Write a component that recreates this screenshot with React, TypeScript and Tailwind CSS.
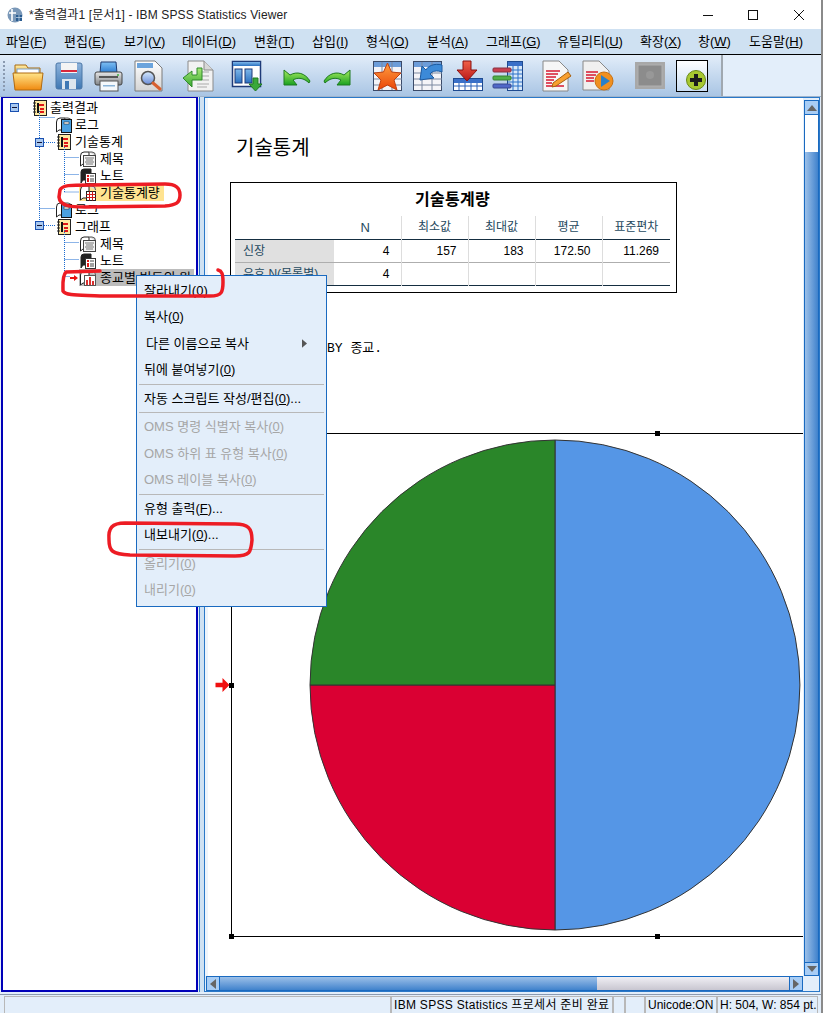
import React from "react";

const G = ({ id, a, b, h }: { id: string; a: string; b: string; h?: boolean }) => (
  <linearGradient id={id} x1="0" y1="0" x2={h ? "1" : "0"} y2={h ? "0" : "1"}>
    <stop offset="0" stopColor={a} />
    <stop offset="1" stopColor={b} />
  </linearGradient>
);

const Svg = ({ children, className }: { children: React.ReactNode; className: string }) => (
  <svg viewBox="0 0 32 32" className={className}>{children}</svg>
);

const Folder = () => (
  <Svg className="w-[32px] h-[32px] shrink-0">
    <defs><G id="f1" a="#ffe58a" b="#f08a10" /><G id="f2" a="#fff2b0" b="#e8a020" /></defs>
    <path d="M3 5 L14 5 L16 8 L28 8 L28 14 L3 14 Z" fill="url(#f2)" stroke="#a86a10" />
    <rect x="5" y="9" width="22" height="6" fill="#fff" stroke="#7aa0c8" />
    <path d="M1 13 L31 13 L29 30 L3 30 Z" fill="url(#f1)" stroke="#b06a10" />
  </Svg>
);
const Save = () => (
  <Svg className="w-[32px] h-[32px] shrink-0">
    <defs><G id="s1" a="#8fb4dc" b="#3f78b4" /></defs>
    <rect x="3" y="3" width="26" height="26" rx="2" fill="url(#s1)" stroke="#4a76a6" />
    <rect x="8" y="3" width="16" height="10" fill="#f4f4f4" />
    <rect x="8" y="10" width="16" height="2" fill="#d8283c" />
    <rect x="9" y="19" width="14" height="10" fill="#dde6ee" />
    <rect x="12" y="21" width="4" height="8" fill="#3f78b4" />
  </Svg>
);
const Printer = () => (
  <Svg className="w-[32px] h-[32px] shrink-0">
    <defs><G id="p1" a="#e8e8e8" b="#808488" /><G id="p2" a="#7fc0f4" b="#2a7ad0" /></defs>
    <path d="M9 2 L24 2 L25 13 L8 13 Z" fill="url(#p2)" stroke="#1e3a70" />
    <rect x="3" y="12" width="27" height="13" rx="2" fill="url(#p1)" stroke="#444" />
    <rect x="7" y="16" width="19" height="2" fill="#555" />
    <rect x="8" y="21" width="18" height="10" fill="#f4f8fb" stroke="#555" />
    <rect x="11" y="25" width="12" height="1.5" fill="#8ab4d8" />
    <circle cx="26" cy="15" r="1" fill="#40b040" />
  </Svg>
);
const Preview = () => (
  <Svg className="w-[32px] h-[32px] shrink-0">
    <defs><G id="v1" a="#ffffff" b="#d4d4d4" /><G id="v2" a="#d8ecff" b="#6a8cd8" /></defs>
    <path d="M2 1 L22 1 L29 8 L29 31 L2 31 Z" fill="url(#v1)" stroke="#7a7a7a" />
    <rect x="4" y="3" width="16" height="5" fill="#6ca4dc" />
    <circle cx="15" cy="18" r="6.5" fill="url(#v2)" stroke="#555" strokeWidth="1.5" />
    <path d="M20 23 L27 29" stroke="#d86030" strokeWidth="3" strokeLinecap="round" />
  </Svg>
);
const Goto = () => (
  <Svg className="w-[32px] h-[32px] shrink-0">
    <defs><G id="g1" a="#a8e878" b="#38a830" /></defs>
    <path d="M6 1 L22 1 L31 10 L31 31 L6 31 Z" fill="#f2f2f2" stroke="#8a8a8a" />
    <path d="M22 1 L22 10 L31 10" fill="#d8d8d8" stroke="#8a8a8a" />
    <path d="M20 12 H27 M20 16 H27 M20 20 H27 M15 24 H27 M15 27 H25" stroke="#aaa" />
    <path d="M1 18 L10 11 L10 15 L15 15 L15 8 L20 8 L20 20 L10 20 L10 27 Z" fill="url(#g1)" stroke="#2f8a2a" />
  </Svg>
);
const Outline = () => (
  <Svg className="w-[32px] h-[32px] shrink-0">
    <defs><G id="o1" a="#7fb8ea" b="#2a70c0" /></defs>
    <rect x="1.5" y="1.5" width="28" height="25" fill="#fff" stroke="#1e3a78" strokeWidth="1.5" />
    <rect x="2" y="2" width="27" height="4" fill="url(#o1)" />
    <rect x="4" y="9" width="7" height="14" fill="url(#o1)" stroke="#1e3a78" />
    <rect x="14" y="9" width="7" height="14" fill="url(#o1)" stroke="#1e3a78" />
    <path d="M22 18 L27 18 L27 24 L31 24 L24.5 31 L18 24 L22 24 Z" fill="#3aa83a" stroke="#1f7a20" />
  </Svg>
);
const Undo = () => (
  <Svg className="w-[32px] h-[32px] shrink-0">
    <defs><G id="u1" a="#a8ec60" b="#18a020" /></defs>
    <path d="M3 10 L3 25 L16 25 L12 20 C17 17 23 18 28 23 L29 21 C24 13 16 11 9 15 Z" fill="url(#u1)" stroke="#1e7a20" />
  </Svg>
);
const Redo = () => (
  <Svg className="w-[32px] h-[32px] shrink-0">
    <defs><G id="r1" a="#a8ec60" b="#18a020" /></defs>
    <path d="M29 10 L29 25 L16 25 L20 20 C15 17 9 18 4 23 L3 21 C8 13 16 11 23 15 Z" fill="url(#r1)" stroke="#1e7a20" />
  </Svg>
);
const TableBase = () => (
  <>
    <rect x="1.5" y="1.5" width="28" height="29" fill="#f4f4f8" stroke="#3a4a68" />
    <rect x="2" y="2" width="27" height="5" fill="#6c9cd8" />
    <path d="M2 13 H30 M2 19 H30 M2 25 H30 M10 2 V30 M20 2 V30" stroke="#7a88a0" />
  </>
);
const StarIcon = () => (
  <Svg className="w-[32px] h-[32px] shrink-0">
    <defs><G id="st" a="#ffa040" b="#ea4408" /></defs>
    <TableBase />
    <path d="M15.5 3 L19.5 12 L29 13 L22 20 L25 30 L15.5 25 L6 30 L9 20 L2 13 L11.5 12 Z" fill="url(#st)" stroke="#c04010" />
  </Svg>
);
const Pivot = () => (
  <Svg className="w-[32px] h-[32px] shrink-0">
    <TableBase />
    <path d="M30 5 C22 3 16 6 14 10 L10 6 L8 20 L22 18 L18 14 C20 11 25 10 30 12 Z" fill="#3c8ad8" stroke="#1c5aa0" />
  </Svg>
);
const ImportIc = () => (
  <Svg className="w-[32px] h-[32px] shrink-0">
    <defs><G id="im" a="#f06048" b="#b81818" /></defs>
    <rect x="1.5" y="18.5" width="29" height="12" fill="#fff" stroke="#1e4a90" />
    <rect x="2" y="19" width="28" height="4" fill="#3a70c8" />
    <path d="M2 26 H30 M7 23 V30 M13 23 V30 M19 23 V30 M25 23 V30" stroke="#2a60b8" />
    <path d="M11 1 L19 1 L19 10 L25 10 L15 21 L5 10 L11 10 Z" fill="url(#im)" stroke="#8a1010" />
  </Svg>
);
const VarTable = () => (
  <Svg className="w-[32px] h-[32px] shrink-0">
    <rect x="15.5" y="1.5" width="15" height="29" fill="#d8e8f8" stroke="#1e4a90" />
    <rect x="16" y="2" width="14" height="4" fill="#3a70c8" />
    <path d="M16 10 H30 M16 14 H30 M16 18 H30 M16 22 H30 M16 26 H30 M21 6 V30 M26 6 V30" stroke="#2a70c8" />
    <rect x="1" y="8" width="18" height="4" rx="1" fill="#c84050" stroke="#883040" />
    <rect x="1" y="16" width="18" height="4" rx="1" fill="#50b048" stroke="#388030" />
    <rect x="1" y="24" width="18" height="4" rx="1" fill="#5068c8" stroke="#384890" />
  </Svg>
);
const DocEdit = () => (
  <Svg className="w-[32px] h-[32px] shrink-0">
    <path d="M1 1 L17 1 L26 10 L26 31 L1 31 Z" fill="#f6f6f6" stroke="#888" />
    <path d="M4 11 H18 M4 14 H16 M4 17 H14 M4 20 H12 M4 23 H10 M4 26 H22" stroke="#d81830" strokeWidth="1.5" />
    <path d="M11 23 L26 12 L29 16 L14 26 L10 27 Z" fill="#f8a030" stroke="#a86010" />
  </Svg>
);
const DocPlay = () => (
  <Svg className="w-[32px] h-[32px] shrink-0">
    <path d="M1 1 L17 1 L27 11 L27 30 L1 30 Z" fill="#f0f0f0" stroke="#888" />
    <path d="M4 12 H16 M4 15 H14 M4 18 H12 M4 21 H12" stroke="#d81830" strokeWidth="1.5" />
    <circle cx="22" cy="21" r="9" fill="#f09020" stroke="#c87010" />
    <path d="M19 15 L28 21 L19 27 Z" fill="#2a80c8" />
  </Svg>
);
const GrayBox = () => (
  <Svg className="w-[32px] h-[32px] shrink-0">
    <rect x="1" y="2" width="30" height="27" fill="#a8a8a8" />
    <rect x="4" y="5" width="24" height="21" fill="#8c8c8c" stroke="#b0b0b0" />
    <circle cx="16" cy="15" r="4" fill="#989898" />
  </Svg>
);
const PlusBox = () => (
  <Svg className="w-[32px] h-[32px] shrink-0">
    <defs><G id="pb" a="#ffffff" b="#c8dcf2" /></defs>
    <rect x="0.5" y="0.5" width="31" height="31" fill="url(#pb)" stroke="#000" />
    <circle cx="20" cy="20" r="9.5" fill="#a8c830" stroke="#6a8a18" />
    <path d="M18 14 H22 V18 H26 V22 H22 V26 H18 V22 H14 V18 H18 Z" fill="#1c1c1c" />
  </Svg>
);

const TI = ({ children }: { children: React.ReactNode }) => (
  <svg viewBox="0 0 16 16" className="w-[16px] h-[16px] shrink-0">{children}</svg>
);
const BookIc = () => (
  <TI>
    <rect x="2.5" y="0.5" width="12" height="15" fill="#ffe9a0" stroke="#222" />
    <path d="M1 3 H4 M1 6 H4 M1 9 H4 M1 12 H4" stroke="#222" />
    <path d="M5 3 H7 V13 H5 Z" fill="#111" />
    <path d="M7 4 H12 V6 H7 Z M8 8 H12 V10 H8 Z M8 11 H12 V13 H8 Z" fill="#e01818" />
  </TI>
);
const Pages = () => (
  <>
    <path d="M0.5 5 Q0.5 1 4 1 H9 V13 H3 L0.5 15 Z" fill="#fff" stroke="#222" />
    <path d="M9 1 H12 Q15.5 1 15.5 5" fill="#ddd" stroke="#555" />
  </>
);
const LogIc = () => (
  <TI>
    <Pages />
    <rect x="5.5" y="2.5" width="10" height="13" fill="#4aa0e0" stroke="#111" />
    <rect x="8" y="5" width="5" height="2" fill="#fff" stroke="#111" strokeWidth="0.5" />
  </TI>
);
const TitleIc = () => (
  <TI>
    <Pages />
    <rect x="3.5" y="4.5" width="12" height="11" fill="#f4f4f4" stroke="#444" />
    <path d="M5 7 H14 M6 9 H13 M5 11 H14 M6 13 H13" stroke="#777" />
  </TI>
);
const NoteIc = () => (
  <TI>
    <path d="M1 4 Q1 1 4 1 H11 V12 H3 L1 15 Z" fill="#222" stroke="#222" />
    <rect x="5.5" y="5.5" width="10" height="10" fill="#fff" stroke="#333" />
    <rect x="7" y="7" width="2" height="2" fill="#e01818" />
    <rect x="7" y="10" width="2" height="4" fill="#e01818" />
    <path d="M10 8 H14 M10 11 H14 M10 13 H14" stroke="#444" />
  </TI>
);
const StatIc = () => (
  <TI>
    <Pages />
    <rect x="6.5" y="6.5" width="9" height="9" fill="#fff" stroke="#222" />
    <path d="M6.5 9.5 H15.5 M6.5 12.5 H15.5 M9.5 6.5 V15.5 M12.5 6.5 V15.5" stroke="#d01818" />
  </TI>
);
const ChartIc = () => (
  <TI>
    <Pages />
    <rect x="4.5" y="5.5" width="11" height="10" fill="#fff" stroke="#555" />
    <path d="M6 10 H8 V15 H6 Z M9 7 H11 V15 H9 Z M12 11 H14 V15 H12 Z" fill="#d83030" />
  </TI>
);

const Key = ({ text, k, tail }: { text: string; k: string; tail?: string }) => (
  <span>
    {text}(<u>{k}</u>){tail}
  </span>
);

const menus: [string, string, string][] = [
  ["파일", "F", "w-[58px]"],
  ["편집", "E", "w-[60px]"],
  ["보기", "V", "w-[58px]"],
  ["데이터", "D", "w-[72px]"],
  ["변환", "T", "w-[58px]"],
  ["삽입", "I", "w-[54px]"],
  ["형식", "O", "w-[61px]"],
  ["분석", "A", "w-[59px]"],
  ["그래프", "G", "w-[71px]"],
  ["유틸리티", "U", "w-[83px]"],
  ["확장", "X", "w-[58px]"],
  ["창", "W", "w-[51px]"],
  ["도움말", "H", "w-[60px]"],
];

const TreeRow = ({ pad, icon, label, gap }: { pad: string; icon: React.ReactNode; label: string; gap?: string }) => (
  <div className={`flex items-center h-[17px] whitespace-nowrap ${pad}`}>
    {icon}
    <span className={gap ?? "ml-[3px]"}>{label}</span>
  </div>
);

const MI = ({ children, dis, cls }: { children: React.ReactNode; dis?: boolean; cls?: string }) => (
  <div className={`h-[26.5px] flex items-center pl-[7px] whitespace-nowrap ${dis ? "text-[#a6a6a6]" : "text-black"} ${cls ?? ""}`}>
    {children}
  </div>
);
const Sep = () => (
  <div className="h-[2px] mx-[2px] flex items-center">
    <div className="h-px w-full bg-[#b8b8b8]" />
  </div>
);

const Handle = ({ cls }: { cls: string }) => <div className={`absolute w-[5px] h-[5px] bg-black ${cls}`} />;

const Tri = ({ d }: { d: string }) => (
  <svg viewBox="0 0 10 10" className="w-[10px] h-[10px]">
    <path d={d} fill="#666" />
  </svg>
);

const SansKr = "font-['Liberation_Sans','Noto_Sans_CJK_KR',sans-serif]";

export default function App() {
  return (
    <div className={`relative w-[833px] h-[1013px] overflow-hidden bg-white text-[13px] text-black ${SansKr}`}>
      <div className="w-[823px] h-[1013px] flex flex-col border-r-2 border-[#8a8a8a] bg-[#e3eefa]">
        {/* title bar */}
        <div className="h-[29px] bg-white flex items-center shrink-0">
          <svg viewBox="0 0 16 16" className="w-[16px] h-[16px] ml-[7px]">
            <circle cx="8" cy="8" r="7.5" fill="#7a98b8" />
            <path d="M5 2 V14 M2 6 H9" stroke="#fff" strokeWidth="1.6" />
            <rect x="9" y="8" width="6" height="6" fill="#2a5c90" />
            <path d="M9 10.5 H15 M12 8 V14" stroke="#cfe0f0" strokeWidth="0.7" />
          </svg>
          <span className="ml-[6px] text-[12px] tracking-[0.14px] text-[#222] whitespace-nowrap">*출력결과1 [문서1] - IBM SPSS Statistics Viewer</span>
          <div className="ml-auto flex items-center h-full">
            <svg viewBox="0 0 10 10" className="w-[10px] h-[10px] mr-[35px]"><path d="M0 5.5 H10" stroke="#111" /></svg>
            <svg viewBox="0 0 10 10" className="w-[10px] h-[10px] mr-[36px]"><rect x="0.5" y="0.5" width="9" height="9" fill="none" stroke="#111" /></svg>
            <svg viewBox="0 0 10 10" className="w-[10px] h-[10px] mr-[17px]"><path d="M0 0 L10 10 M10 0 L0 10" stroke="#111" /></svg>
          </div>
        </div>
        {/* menu bar */}
        <div className="h-[26px] bg-[#cfe1f2] border-b border-black flex items-center pl-[6px] shrink-0 whitespace-nowrap">
          {menus.map(([t, k, w]) => (
            <div key={k} className={`${w} shrink-0`}>
              <Key text={t} k={k} />
            </div>
          ))}
        </div>
        {/* toolbar */}
        <div className="h-[42px] flex shrink-0 border-b border-[#9fb4cc]">
          <div className="w-[723px] flex items-center pl-[3px] border-r-2 border-[#a0a8b0] bg-gradient-to-b from-[#e2edf9] to-[#a9c5e4]">
            <div className="w-[2px] h-[30px] mr-[7px] border-l-2 border-dotted border-[#8a9ab0]" />
            <Folder />
            <div className="ml-[9px]"><Save /></div>
            <div className="ml-[7px]"><Printer /></div>
            <div className="ml-[9px]"><Preview /></div>
            <div className="ml-[17px]"><Goto /></div>
            <div className="ml-[17px]"><Outline /></div>
            <div className="ml-[18px]"><Undo /></div>
            <div className="ml-[8px]"><Redo /></div>
            <div className="ml-[19px]"><StarIcon /></div>
            <div className="ml-[8px]"><Pivot /></div>
            <div className="ml-[8px]"><ImportIc /></div>
            <div className="ml-[8px]"><VarTable /></div>
            <div className="ml-[18px]"><DocEdit /></div>
            <div className="ml-[8px]"><DocPlay /></div>
            <div className="ml-[20px]"><GrayBox /></div>
            <div className="ml-[10px]"><PlusBox /></div>
          </div>
        </div>
        {/* main */}
        <div className="flex h-[898px] shrink-0 border-b border-[#8a9ab0]">
          {/* tree pane */}
          <div className="w-[197px] ml-px h-[895px] shrink-0 bg-white border-2 border-t border-[#0000b8] relative overflow-hidden text-[13px]">
            <div className="relative pt-px">
              <svg viewBox="3 99 194 190" className="absolute left-0 top-0 w-[194px] h-[190px] pointer-events-none">
                <path d="M39.5 112 V226 M39.5 118.5 H55 M44 143.5 H55 M44 226.5 H55 M39.5 209.5 H55 M64.5 148 V193 M64.5 158.5 H79 M64.5 175.5 H79 M64.5 193 H79 M64.5 231 V277 M64.5 243.5 H79 M64.5 260.5 H79 M64.5 277.5 H70" stroke="#1a6ad0" strokeDasharray="1 1" fill="none" />
                <g>
                  <rect x="10.5" y="104.5" width="8" height="8" fill="#a8c8f0" stroke="#1a50b0" />
                  <path d="M12 108.5 H17" stroke="#113" />
                  <rect x="35.5" y="139.5" width="8" height="8" fill="#a8c8f0" stroke="#1a50b0" />
                  <path d="M37 143.5 H42" stroke="#113" />
                  <rect x="35.5" y="222.5" width="8" height="8" fill="#a8c8f0" stroke="#1a50b0" />
                  <path d="M37 226.5 H42" stroke="#113" />
                </g>
              </svg>
              <TreeRow pad="pl-[29px]" icon={<BookIc />} label="출력결과" gap="ml-[2px]" />
              <TreeRow pad="pl-[53px]" icon={<LogIc />} label="로그" />
              <TreeRow pad="pl-[53px]" icon={<BookIc />} label="기술통계" />
              <TreeRow pad="pl-[77px]" icon={<TitleIc />} label="제목" gap="ml-[4px]" />
              <TreeRow pad="pl-[77px]" icon={<NoteIc />} label="노트" gap="ml-[4px]" />
              <div className="flex items-center h-[17px] pl-[76px] whitespace-nowrap">
                <div className="flex items-center bg-[#ffe390] w-[85px] h-[17px] pl-px">
                  <StatIc />
                  <span className="ml-[4px]">기술통계량</span>
                </div>
              </div>
              <TreeRow pad="pl-[53px]" icon={<LogIc />} label="로그" />
              <TreeRow pad="pl-[53px]" icon={<BookIc />} label="그래프" />
              <TreeRow pad="pl-[77px]" icon={<TitleIc />} label="제목" gap="ml-[4px]" />
              <TreeRow pad="pl-[77px]" icon={<NoteIc />} label="노트" gap="ml-[4px]" />
              <div className="flex items-center h-[17px] pl-[67px] whitespace-nowrap">
                <svg viewBox="0 0 8 8" className="w-[8px] h-[8px] mr-px"><path d="M0 3 H4 V1 L8 4 L4 7 V5 H0 Z" fill="#e81010" /></svg>
                <div className="flex items-center bg-[#bcbcbc] w-[115px] h-[17px] pl-px">
                  <ChartIc />
                  <span className="ml-[4px]">종교별 빈도의 원</span>
                </div>
              </div>
            </div>
          </div>
          {/* splitter */}
          <div className="w-[6px] ml-[1px] h-[895px] shrink-0 border-x border-[#2a78c8] bg-[#cfe1f2]" />
          {/* right pane */}
          <div className="w-[616px] h-[895px] -ml-px shrink-0 flex flex-col border border-[#2a78c8] bg-[#e3eefa]">
            <div className="flex h-[878px] shrink-0">
              <div className="w-[598px] h-full bg-white overflow-hidden border-l-[3px] border-[#eef4fb] shrink-0">
                <div className="h-[3px] overflow-hidden ml-[44px]">
                  <div className="-mt-[11px] font-['Liberation_Mono',monospace] text-[12px] leading-[14px] whitespace-nowrap">DESCRIPTIVES VARIABLES=HEIGHT .... .....</div>
                </div>
                <h1 className="mt-[34px] ml-[28px] h-[26px] text-[20px] leading-[26px] font-normal">기술통계</h1>
                {/* table */}
                <div className="mt-[21px] ml-[22px] w-[447px] h-[111px] border border-black px-[4px] bg-white">
                  <table className="table-fixed w-[435px] border-collapse text-[12px]">
                    <colgroup>
                      <col className="w-[99px]" />
                      <col className="w-[67px]" />
                      <col className="w-[67px]" />
                      <col className="w-[67px]" />
                      <col className="w-[67px]" />
                      <col className="w-[68px]" />
                    </colgroup>
                    <thead>
                      <tr className="h-[33px]">
                        <th colSpan={6} className="text-[16px] font-bold tracking-[0.3px] text-center">기술통계량</th>
                      </tr>
                      <tr className="h-[23px] border-b border-[#152e41] text-[#264a60] font-normal">
                        <th className="font-normal"></th>
                        <th className="font-normal text-center pr-[4px] border-r border-[#dddddd] text-[13px]">N</th>
                        <th className="font-normal text-center border-r border-[#dddddd]">최소값</th>
                        <th className="font-normal text-center border-r border-[#dddddd]">최대값</th>
                        <th className="font-normal text-center border-r border-[#dddddd]">평균</th>
                        <th className="font-normal text-center">표준편차</th>
                      </tr>
                    </thead>
                    <tbody>
                      <tr className="h-[23px] border-b border-[#aeaeae]">
                        <td className="bg-[#e0e0e0] pl-[8px] text-[#264a60]">신장</td>
                        <td className="text-right pr-[11px] border-r border-[#dddddd]">4</td>
                        <td className="text-right pr-[11px] border-r border-[#dddddd]">157</td>
                        <td className="text-right pr-[11px] border-r border-[#dddddd]">183</td>
                        <td className="text-right pr-[11px] border-r border-[#dddddd]">172.50</td>
                        <td className="text-right pr-[11px]">11.269</td>
                      </tr>
                      <tr className="h-[23px] border-b border-[#152e41]">
                        <td className="bg-[#e0e0e0] pl-[8px] text-[#264a60] whitespace-nowrap overflow-hidden">유효 N(목록별)</td>
                        <td className="text-right pr-[11px] border-r border-[#dddddd]">4</td>
                        <td className="border-r border-[#dddddd]"></td>
                        <td className="border-r border-[#dddddd]"></td>
                        <td className="border-r border-[#dddddd]"></td>
                        <td></td>
                      </tr>
                    </tbody>
                  </table>
                </div>
                <div className="mt-[48px] ml-[119px] h-[16px] leading-[16px] font-['Liberation_Mono','Noto_Sans_CJK_KR',monospace] text-[13px]">BY 종교.</div>
                {/* chart */}
                <div className="relative mt-[76px] ml-[23px] w-[854px] h-[504px] border border-black">
                  <Handle cls="left-[423px] -top-[3px]" />
                  <Handle cls="left-[423px] -bottom-[3px]" />
                  <Handle cls="-left-[3px] -bottom-[3px]" />
                  <Handle cls="-left-[3px] top-[249px]" />
                  <svg viewBox="0 0 12 12" className="absolute -left-[17px] top-[244px] w-[15px] h-[14px]">
                    <path d="M0 4 H6 V0 L12 6 L6 12 V8 H0 Z" fill="#f01010" />
                  </svg>
                  <svg viewBox="0 0 492 492" className="ml-[77px] mt-[5px] w-[492px] h-[492px]">
                    <path d="M246 246 V1 A245 245 0 0 1 246 491 Z" fill="#5596e6" stroke="#333" />
                    <path d="M246 246 V491 A245 245 0 0 1 1 246 Z" fill="#da0033" stroke="#333" />
                    <path d="M246 246 H1 A245 245 0 0 1 246 1 Z" fill="#2a8629" stroke="#333" />
                  </svg>
                </div>
              </div>
              {/* v scroll */}
              <div className="w-[15px] ml-px mt-[2px] h-[876px] flex flex-col shrink-0">
                <div className="h-[15px] border border-[#1a6ac0] bg-[#a8cdf5] flex items-center justify-center"><Tri d="M5 2 L10 8 L0 8 Z" /></div>
                <div className="h-[37px] bg-white border-x border-[#1a6ac0]" />
                <div className="flex-1 bg-gradient-to-r from-[#9cc0e8] to-[#3f82cc] border-x border-[#1a6ac0]" />
                <div className="h-[14px] border border-[#1a6ac0] bg-[#a8cdf5] flex items-center justify-center"><Tri d="M0 2 L10 2 L5 8 Z" /></div>
              </div>
            </div>
            {/* h scroll */}
            <div className="h-[15px] w-[597px] ml-px flex shrink-0 border border-[#1a6ac0] bg-[#e3eefa]">
              <div className="w-[13px] h-full bg-[#a8cdf5] border-r border-[#1a6ac0] flex items-center justify-center"><Tri d="M8 0 L8 10 L2 5 Z" /></div>
              <div className="w-[377px] h-full bg-gradient-to-b from-[#9cc0e8] to-[#3f82cc]" />
              <div className="flex-1 h-full bg-gradient-to-b from-[#f0eff4] to-[#c8c6d0]" />
              <div className="w-[13px] h-full bg-[#a8cdf5] border-l border-[#1a6ac0] flex items-center justify-center"><Tri d="M2 0 L8 5 L2 10 Z" /></div>
            </div>
          </div>
        </div>
        {/* status bar */}
        <div className="flex flex-1 pl-[4px] pt-px text-[12px] whitespace-nowrap leading-[16px] text-black">
          <div className="w-[387px] border border-[#b8b8b8]" />
          <div className="w-[222px] border border-[#b8b8b8] pl-[2px] tracking-[0.3px]">IBM SPSS Statistics 프로세서 준비 완료</div>
          <div className="w-[12px] border border-[#b8b8b8]" />
          <div className="w-[20px] border border-[#b8b8b8]" />
          <div className="w-[72px] border border-[#b8b8b8] pl-[2px]">Unicode:ON</div>
          <div className="w-[101px] border border-[#b8b8b8] pl-[2px]">H: 504, W: 854 pt.</div>
        </div>
      </div>

      {/* context menu */}
      <div className="absolute left-[136px] top-[275px] w-[191px] h-[332px] bg-[#e3eefa] border border-[#1a6ac0] pt-px">
        <MI><Key text="잘라내기" k="0" /></MI>
        <MI><Key text="복사" k="0" /></MI>
        <MI cls="justify-between pr-[19px]">
          <span className="pl-[2px]">다른 이름으로 복사</span>
          <svg viewBox="0 0 6 10" className="w-[5px] h-[9px]"><path d="M0 0 L6 5 L0 10 Z" fill="#555" /></svg>
        </MI>
        <MI><Key text="뒤에 붙여넣기" k="0" /></MI>
        <Sep />
        <MI><Key text="자동 스크립트 작성/편집" k="0" tail="..." /></MI>
        <Sep />
        <MI dis><Key text="OMS 명령 식별자 복사" k="0" /></MI>
        <MI dis><Key text="OMS 하위 표 유형 복사" k="0" /></MI>
        <MI dis><Key text="OMS 레이블 복사" k="0" /></MI>
        <Sep />
        <MI><Key text="유형 출력" k="F" tail="..." /></MI>
        <MI><Key text="내보내기" k="0" tail="..." /></MI>
        <Sep />
        <MI dis><Key text="올리기" k="0" /></MI>
        <MI dis><Key text="내리기" k="0" /></MI>
      </div>

      {/* red hand-drawn annotations */}
      <svg viewBox="0 0 833 1013" className="absolute left-0 top-0 w-[833px] h-[1013px] pointer-events-none">
        <g fill="none" stroke="#ed1c24" strokeWidth="3.5" strokeLinejoin="round" strokeLinecap="round">
          <path d="M60 190 C62 185 70 185 90 185 L165 184 C175 184 180 187 180 195 C180 203 176 205 165 206 L85 207 C70 207 60 206 59 197 Z" />
          <path d="M66 272 C62 276 63 285 63 291 C66 296 80 295 100 296 L210 296 C222 296 223 292 223 282 C223 274 222 271 218 270 M66 272 L100 271" />
          <path d="M125 523 C112 523 108 528 109 540 C109 551 112 554 130 555 L235 556 C250 556 251 552 252 540 C252 528 248 524 235 524 L125 523 Z" />
        </g>
      </svg>
    </div>
  );
}
